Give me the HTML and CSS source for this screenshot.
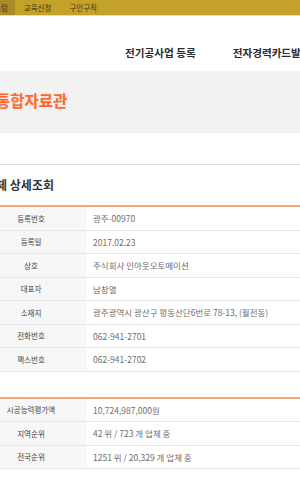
FILE: index.html
```html
<!DOCTYPE html>
<html>
  <head>
    <meta charset="utf-8">
    <title>업체 상세조회</title>
    <link rel="stylesheet" href="styles.css">
  </head>
  <body>
  <div id="wrap">
    <div class="topbar">
      <span class="top-item on">포럼</span>
      <span class="top-item">교육신청</span>
      <span class="top-item">구인구직</span>
    </div>
    <div class="gnb">
      <span class="gnb-item">전기공사업 등록</span>
      <span class="gnb-item">전자경력카드발급</span>
    </div>
    <div class="banner">
      <h1>통합자료관</h1>
    </div>
    <div class="content">
      <div class="sub-line"></div>
      <h2>업체 상세조회</h2>
      <table class="info">
        <tr><th>등록번호</th><td>광주-00970</td></tr>
        <tr><th>등록일</th><td>2017.02.23</td></tr>
        <tr><th>상호</th><td>주식회사 인아웃오토메이션</td></tr>
        <tr><th>대표자</th><td>남창열</td></tr>
        <tr><th>소재지</th><td>광주광역시 광산구 평동산단6번로 78-13, (월전동)</td></tr>
        <tr><th>전화번호</th><td>062-941-2701</td></tr>
        <tr><th>팩스번호</th><td>062-941-2702</td></tr>
      </table>
      <table class="info rank">
        <tr><th>시공능력평가액</th><td>10,724,987,000원</td></tr>
        <tr><th>지역순위</th><td>42 위 / 723 개 업체 중</td></tr>
        <tr><th>전국순위</th><td>1251 위 / 20,329 개 업체 중</td></tr>
      </table>
    </div>
  </div>
  </body>
</html>
```

FILE: styles.css
```css
      body {
        font-family: "Noto Sans CJK KR", "Noto Sans", sans-serif;
        background-color: #fff;
        margin: 0;
        padding: 0;
        color: #333;
        overflow: hidden;
      }
      #wrap {
        width: 300px;
        overflow: hidden;
        white-space: nowrap;
      }
      .topbar {
        display: flex;
        height: 15px;
        background-color: #c4a22a;
        border-bottom: 1px solid #e9dca6;
        font-size: 7.5px;
        line-height: 15px;
        color: #45380f;
      }
      .top-item {
        padding: 0 9px;
      }
      .top-item.on {
        background-color: #a98c25;
        margin-left: -15px;
        padding-right: 7px;
      }
      .gnb {
        display: flex;
        gap: 37px;
        height: 55px;
        padding-left: 125px;
        box-sizing: border-box;
        padding-top: 31px;
        font-size: 10.6px;
        font-weight: bold;
        line-height: 12px;
        color: #2b2b2b;
      }
      .banner {
        height: 62px;
        background-color: #f2f2f2;
        padding-top: 19px;
        box-sizing: border-box;
      }
      .banner h1 {
        margin: 0 0 0 -4px;
        font-size: 15.5px;
        line-height: 20px;
        color: #ff6a2c;
        text-shadow: 0 0 2px rgba(255, 140, 120, 0.35);
      }
      .content {
        padding-top: 31px;
        margin-left: -25px;
      }
      .sub-line {
        height: 1px;
        background-color: #dcdcdc;
        width: 400px;
      }
      h2 {
        margin: 13px 0 0 10px;
        font-size: 12px;
        line-height: 14px;
        height: 27px;
        color: #333;
      }
      .info {
        width: 400px;
        border-collapse: collapse;
        border-top: 2px solid #f7a47c;
        font-size: 7.5px;
      }
      .info th, .info td {
        height: 22.5px;
        padding: 0;
        border-bottom: 1px solid #e6e6e6;
        font-weight: normal;
      }
      .info th {
        width: 112px;
        background-color: #f7f7f7;
        color: #444;
        text-align: center;
      }
      .info td {
        padding-left: 6px;
        font-size: 8.5px;
        color: #6e6e6e;
        text-align: left;
      }
      .rank {
        margin-top: 25px;
      }
```
